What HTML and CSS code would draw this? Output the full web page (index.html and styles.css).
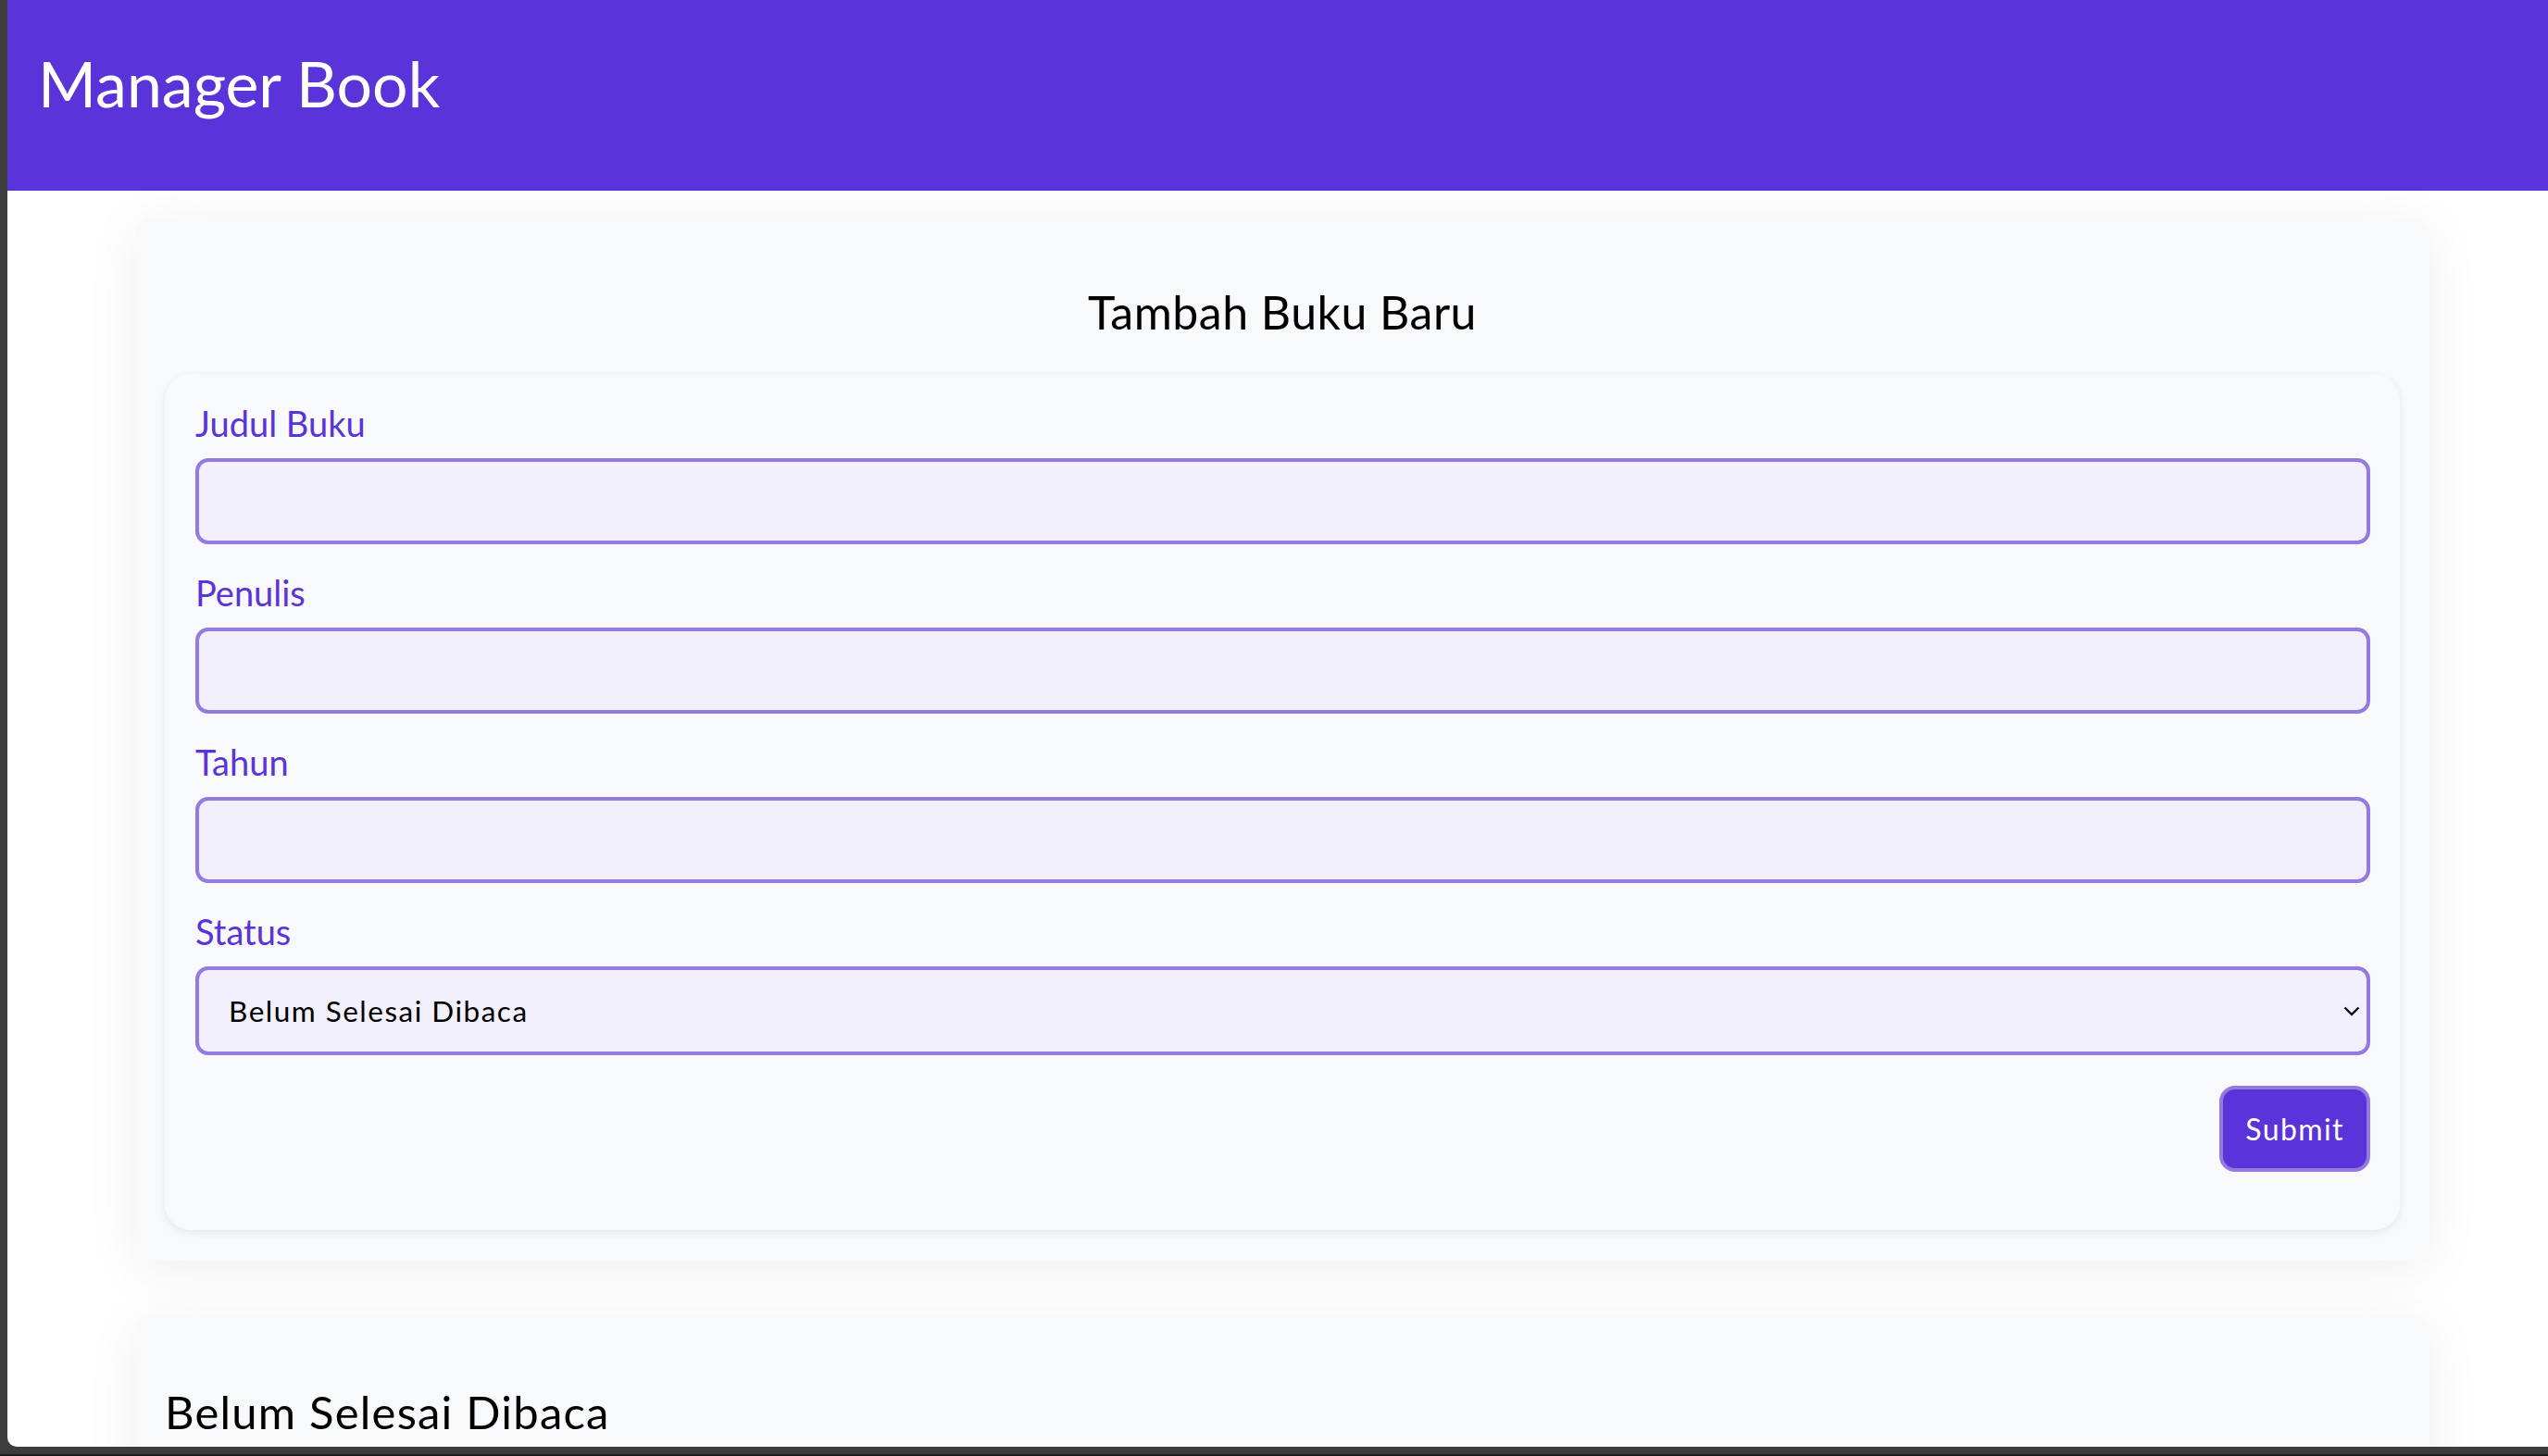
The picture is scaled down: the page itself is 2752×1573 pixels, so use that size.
FILE: index.html
```html
<!DOCTYPE html>
<html lang="id">
<head>
<meta charset="utf-8">
<title>Manager Book</title>
<link rel="stylesheet" href="styles.css">
</head>
<body>
<div class="frame">
  <div class="window">
    <header class="app-header">
      <h1 class="app-title">Manager Book</h1>
    </header>
    <main class="content">
      <section class="card form-card">
        <h2 class="form-title">Tambah Buku Baru</h2>
        <form class="form-panel">
          <div class="field">
            <label class="field-label" for="judul">Judul Buku</label>
            <input class="field-input" id="judul" type="text">
          </div>
          <div class="field">
            <label class="field-label" for="penulis">Penulis</label>
            <input class="field-input" id="penulis" type="text">
          </div>
          <div class="field">
            <label class="field-label" for="tahun">Tahun</label>
            <input class="field-input" id="tahun" type="number">
          </div>
          <div class="field">
            <label class="field-label" for="status">Status</label>
            <div class="select-wrap">
              <select class="field-select" id="status">
                <option>Belum Selesai Dibaca</option>
                <option>Selesai Dibaca</option>
              </select>
              <svg class="select-arrow" width="18" height="11" viewBox="0 0 18 11" aria-hidden="true">
                <path d="M1.5 1.5 L9 9 L16.5 1.5" fill="none" stroke="#111" stroke-width="2.4"/>
              </svg>
            </div>
          </div>
          <div class="actions">
            <button class="submit-btn" type="button">Submit</button>
          </div>
        </form>
      </section>
      <section class="card list-card">
        <h2 class="list-title">Belum Selesai Dibaca</h2>
      </section>
    </main>
  </div>
</div>
</body>
</html>
```
FILE: styles.css
```css
html, body {
  margin: 0;
  padding: 0;
}
body {
  background: #1f1f1f;
  height: 1573px;
  overflow: hidden;
  font-family: Lato, "Open Sans", sans-serif;
}
.frame {
  background: #3c3c3c;
  height: 1571px;
  padding-left: 8px;
  box-sizing: border-box;
}
.window {
  height: 1563px;
  background: #ffffff;
  border-bottom-left-radius: 10px;
  overflow: hidden;
}
.app-header {
  height: 206px;
  background: #5a33d9;
  padding: 49px 0 0 33px;
  box-sizing: border-box;
}
.app-title {
  margin: 0;
  font-weight: 400;
  font-size: 68px;
  line-height: 82px;
  color: #ffffff;
}
.content {
  padding-top: 31px;
}
.card {
  width: 2478px;
  margin-left: 138px;
  background: #f8f9fb;
  border-radius: 17px;
  box-shadow: 0 8px 60px rgba(0, 0, 0, 0.07);
  box-sizing: border-box;
}
.form-card {
  padding: 70px 32px 33px;
}
.form-title {
  margin: 0;
  text-align: center;
  font-weight: 400;
  font-size: 50px;
  line-height: 60px;
  letter-spacing: 0.5px;
  color: #000;
}
.form-panel {
  margin: 37px 0 0;
  background: #f8f9fb;
  border-radius: 28px;
  box-shadow: 0 3px 10px rgba(0, 0, 0, 0.07);
  padding: 30px 32px 63px 33px;
}
.field + .field {
  margin-top: 29px;
}
.field-label {
  display: block;
  font-size: 38px;
  line-height: 46px;
  color: #5a33d9;
}
.field-input,
.field-select {
  display: block;
  width: 100%;
  height: 93px;
  margin: 15px 0 0;
  box-sizing: border-box;
  border: 4px solid #9479e0;
  border-radius: 14px;
  background: #f3f0fe;
  font-family: inherit;
  font-size: 31.5px;
  color: #000;
  outline: none;
}
.field-input {
  padding: 0 33px;
}
.select-wrap {
  position: relative;
}
.field-select {
  height: 96px;
  -webkit-appearance: none;
  appearance: none;
  padding: 0 60px 0 32px;
  letter-spacing: 1.5px;
}
.select-arrow {
  position: absolute;
  right: 11px;
  top: 43px;
}
.actions {
  display: flex;
  justify-content: flex-end;
  margin-top: 33px;
}
.submit-btn {
  height: 93px;
  padding: 0 24px;
  box-sizing: border-box;
  border: 4px solid #9479e0;
  border-radius: 17px;
  background: #5a33d9;
  color: #fff;
  font-family: inherit;
  font-size: 32px;
  letter-spacing: 1.4px;
}
.list-card {
  margin-top: 61px;
  padding: 74px 32px 120px;
}
.list-title {
  margin: 0;
  font-weight: 400;
  font-size: 49px;
  line-height: 56px;
  letter-spacing: 1.2px;
  color: #000;
}
```
